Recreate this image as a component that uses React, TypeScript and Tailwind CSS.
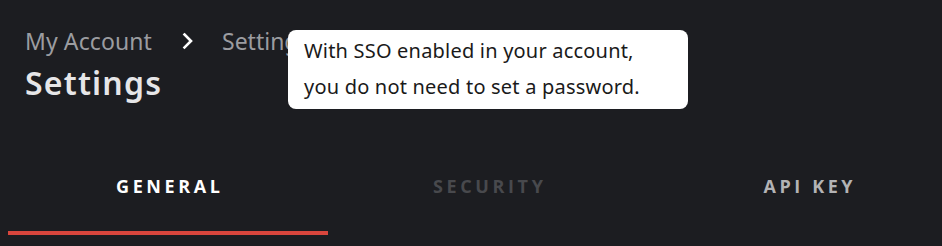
import React from "react";

export default function App() {
  return (
    <div
      className="relative w-[942px] h-[246px] overflow-hidden bg-[#1c1d21]"
      style={{ fontFamily: '"Open Sans", "Noto Sans", sans-serif' }}
    >
      <div className="pl-[25px] pt-[25px]" style={{ fontFamily: '"Noto Sans", sans-serif' }}>
        <div className="flex items-center text-[23px] leading-[32px] text-[#9b9ca0]">
          <span className="tracking-[0.1px]">My Account</span>
          <svg
            className="ml-[30px] mr-[28px]"
            width="12"
            height="18"
            viewBox="0 0 12 18"
            fill="none"
          >
            <path d="M2.5 2.5 L9 9 L2.5 15.5" stroke="#ffffff" strokeWidth="2.6" strokeLinecap="square" />
          </svg>
          <span>Settings</span>
        </div>
        <div className="text-[32px] leading-[40px] font-semibold tracking-[1.2px] text-[#e6e6e8] mt-[6px]">Settings</div>
      </div>

      <div className="flex ml-[8px] mt-[71px] w-[960px]">
        <div className="w-[320px] shrink-0 flex flex-col items-center">
          <span className="text-[18px] leading-[24px] font-bold tracking-[0.2em] text-white pl-[0.2em]">GENERAL</span>
          <div className="mt-[33px] h-[4px] w-full bg-[#d9463d]" />
        </div>
        <div className="w-[320px] shrink-0 flex justify-center">
          <span className="text-[18px] leading-[24px] font-bold tracking-[0.2em] text-[#48494d] pl-[0.2em]">SECURITY</span>
        </div>
        <div className="w-[320px] shrink-0 flex justify-center">
          <span className="text-[18px] leading-[24px] font-bold tracking-[0.2em] text-[#b3b3b5] pl-[0.2em]">API KEY</span>
        </div>
      </div>

      <div
        className="absolute left-[288px] top-[30px] w-[400px] h-[79px] rounded-[8px] bg-white px-[16px] pt-[3px] text-[20px] leading-[36px] tracking-[0.2px] text-[#1a1a1a]"
        style={{ fontFamily: '"Noto Sans", sans-serif' }}
      >
        <div>With SSO enabled in your account,</div>
        <div>you do not need to set a password.</div>
      </div>
    </div>
  );
}
